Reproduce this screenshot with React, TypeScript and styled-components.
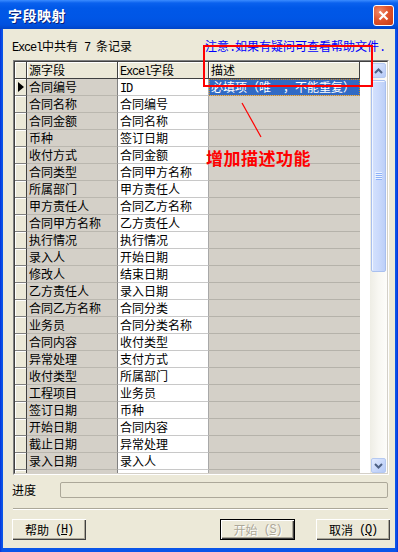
import React from "react";
import styled, { createGlobalStyle } from "styled-components";

const GlobalStyle = createGlobalStyle`
  html, body {
    margin: 0;
    padding: 0;
    background: #ffffff;
  }
  body {
    font-family: "Noto Sans CJK SC", "Liberation Sans", sans-serif;
    font-size: 12px;
    color: #000;
  }
`;

const rows: [string, string][] = [
  ["合同编号", "ID"],
  ["合同名称", "合同编号"],
  ["合同金额", "合同名称"],
  ["币种", "签订日期"],
  ["收付方式", "合同金额"],
  ["合同类型", "合同甲方名称"],
  ["所属部门", "甲方责任人"],
  ["甲方责任人", "合同乙方名称"],
  ["合同甲方名称", "乙方责任人"],
  ["执行情况", "执行情况"],
  ["录入人", "开始日期"],
  ["修改人", "结束日期"],
  ["乙方责任人", "录入日期"],
  ["合同乙方名称", "合同分类"],
  ["业务员", "合同分类名称"],
  ["合同内容", "收付类型"],
  ["异常处理", "支付方式"],
  ["收付类型", "所属部门"],
  ["工程项目", "业务员"],
  ["签订日期", "币种"],
  ["开始日期", "合同内容"],
  ["截止日期", "异常处理"],
  ["录入日期", "录入人"],
  ["", ""],
];

const Latin = styled.span`
  font-family: "Liberation Mono", monospace;
  font-size: 12px;
  letter-spacing: -1.2px;
`;

// ascii runs get the narrow mono face, like SimSun's half-width glyphs
const mix = (text: string) =>
  text.split(/([\x20-\x7e]+)/).map((part, i) =>
    /^[\x20-\x7e]+$/.test(part) ? <Latin key={i}>{part}</Latin> : part
  );

const Window = styled.div`
  position: relative;
  width: 398px;
  height: 552px;
  display: flex;
  flex-direction: column;
  background: linear-gradient(90deg, #0831d9 0px, #0a55e8 2px, #0a55e8 396px, #0831d9 398px);
  overflow: hidden;
`;

const TitleBar = styled.div`
  height: 29px;
  flex: none;
  display: flex;
  align-items: center;
  justify-content: space-between;
  padding: 0 4px 0 8px;
  background: linear-gradient(
    180deg,
    #3b8cff 0px,
    #0a61ee 3px,
    #0058e8 8px,
    #0056e6 18px,
    #0050de 25px,
    #0044c8 29px
  );
`;

const Title = styled.div`
  color: #fff;
  font-weight: bold;
  font-size: 14px;
  line-height: 16px;
  letter-spacing: 0.5px;
  text-shadow: 1px 1px 0 #0a2078;
`;

const CloseButton = styled.div`
  width: 21px;
  height: 21px;
  box-sizing: border-box;
  border: 1px solid #fff;
  border-radius: 3px;
  display: flex;
  align-items: center;
  justify-content: center;
  background: radial-gradient(circle at 30% 30%, #f08a6a 0%, #e0552e 45%, #c63a12 100%);
  margin-top: 1px;
`;

const Body = styled.div`
  flex: 1;
  margin: 0 3px 4px 3px;
  background: #ece9d8;
  display: flex;
  flex-direction: column;
  padding-top: 11px;
`;

const TopLine = styled.div`
  display: flex;
  justify-content: space-between;
  height: 12px;
  line-height: 12px;
  padding: 0 10px 0 9px;
`;

const Note = styled.span`
  color: #0000ff;
`;

const GridBox = styled.div`
  margin: 8px 0 0 10px;
  width: 376px;
  height: 415px;
  box-sizing: border-box;
  border: 1px solid;
  border-color: #808080 #ffffff #ffffff #808080;
`;

const GridInner = styled.div`
  height: 100%;
  box-sizing: border-box;
  border: 1px solid;
  border-color: #404040 #d4d0c8 #d4d0c8 #404040;
  display: flex;
  background: #fff;
  overflow: hidden;
`;

const Table = styled.div`
  width: 355px;
  display: grid;
  grid-template-columns: 12px 91px 91px 151px;
  grid-template-rows: 17px;
  grid-auto-rows: 17px;
  align-content: start;
  background: #fff;
`;

const Cell = styled.div`
  box-sizing: border-box;
  line-height: 16px;
  padding-left: 2px;
  white-space: nowrap;
  overflow: hidden;
`;

const HeadCell = styled(Cell)`
  background: #ece9d8;
  border-right: 1px solid #404040;
  border-bottom: 1px solid #404040;
  box-shadow: inset 1px 1px 0 #ffffff;
`;

const Indicator = styled(Cell)`
  background: #ece9d8;
  border-right: 1px solid #404040;
  border-bottom: 1px solid #808080;
  box-shadow: inset 1px 1px 0 #ffffff;
  display: flex;
  align-items: center;
`;

const Arrow = styled.div`
  width: 0;
  height: 0;
  border-left: 6px solid #000;
  border-top: 5px solid transparent;
  border-bottom: 5px solid transparent;
  margin-left: 1px;
`;

const SourceCell = styled(Cell)`
  background: #d4d0c8;
  border-right: 1px solid #808080;
  border-bottom: 1px solid #bab7af;
`;

const FieldCell = styled(Cell)`
  background: #fff;
  border-right: 1px solid #a8a8a8;
  border-bottom: 1px solid #c8c8c8;
`;

const DescCell = styled(Cell)<{ $selected?: boolean }>`
  background: ${(p) => (p.$selected ? "#316ac5" : "#d4d0c8")};
  color: ${(p) => (p.$selected ? "#fff" : "#000")};
  border-bottom: 1px solid #b5b2aa;
  outline: ${(p) => (p.$selected ? "1px dotted #d08a20" : "none")};
  outline-offset: -1px;
`;

const Scrollbar = styled.div`
  width: 17px;
  flex: none;
  display: flex;
  flex-direction: column;
  background: linear-gradient(90deg, #eeede5 0%, #f8f7f2 50%, #fdfdfa 100%);
`;

const ScrollButton = styled.div`
  width: 15px;
  height: 15px;
  margin: 1px 1px 0 1px;
  box-sizing: border-box;
  border: 1px solid #b5c9f1;
  border-radius: 2px;
  background: linear-gradient(135deg, #e2ebfe 0%, #c6d6fa 60%, #b7cbf6 100%);
  display: flex;
  align-items: center;
  justify-content: center;
`;

const Thumb = styled.div`
  width: 15px;
  height: 192px;
  margin: 2px 1px 0 1px;
  box-sizing: border-box;
  border: 1px solid #a9c0ef;
  border-radius: 2px;
  background: linear-gradient(90deg, #d5e2fd 0%, #cbdafc 50%, #bdd0f8 100%);
  box-shadow: inset 1px 1px 0 #f2f6ff;
  display: flex;
  align-items: center;
  justify-content: center;
`;

const Track = styled.div`
  flex: 1;
`;

const ProgressRow = styled.div`
  margin-top: 7px;
  height: 16px;
  display: flex;
  align-items: center;
  padding-left: 9px;
`;

const ProgressLabel = styled.span`
  width: 48px;
  line-height: 16px;
`;

const ProgressBar = styled.div`
  width: 328px;
  height: 16px;
  box-sizing: border-box;
  border: 1px solid #aca899;
  border-radius: 2px;
  background: #ece9d8;
`;

const Separator = styled.div`
  margin: 10px 0 0 10px;
  width: 375px;
  border-top: 1px solid #aca899;
  border-bottom: 1px solid #ffffff;
`;

const ButtonRow = styled.div`
  margin-top: 9px;
  display: flex;
  padding-left: 9px;
`;

const Button = styled.div<{ $width: number; $disabled?: boolean; $default?: boolean }>`
  width: ${(p) => p.$width}px;
  height: 21px;
  box-sizing: border-box;
  background: #ece9d8;
  display: flex;
  align-items: center;
  justify-content: center;
  line-height: 14px;
  border: ${(p) => (p.$default ? "1px solid #000" : "none")};
  box-shadow: inset 1px 1px 0 #fff, inset -1px -1px 0 #404040, inset -2px -2px 0 #aca899;
  color: ${(p) => (p.$disabled ? "#aca899" : "#000")};
  text-shadow: ${(p) => (p.$disabled ? "1px 1px 0 #fff" : "none")};
`;

const Spacer = styled.div<{ $w?: number }>`
  ${(p) => (p.$w ? `width: ${p.$w}px;` : "flex: 1;")}
`;

const Hot = styled.span`
  text-decoration: underline;
`;

// --- annotation overlays drawn on top of the screenshot ---
const RedBox = styled.div`
  position: absolute;
  left: 203px;
  top: 45px;
  width: 170px;
  height: 42px;
  box-sizing: border-box;
  border: 2px solid #ff0000;
  pointer-events: none;
`;

const RedLine = styled.svg`
  position: absolute;
  left: 0;
  top: 0;
  pointer-events: none;
`;

const RedText = styled.div`
  position: absolute;
  left: 206px;
  top: 148px;
  color: #ff0000;
  font-weight: bold;
  font-size: 17px;
  line-height: 20px;
  letter-spacing: 0.5px;
`;

const Chevron = ({ up }: { up?: boolean }) => (
  <svg width="9" height="6" viewBox="0 0 9 6">
    <polyline
      points={up ? "1,5 4.5,1.5 8,5" : "1,1 4.5,4.5 8,1"}
      fill="none"
      stroke="#4d6185"
      strokeWidth="2"
    />
  </svg>
);

const Grip = () => (
  <svg width="7" height="8" viewBox="0 0 7 8">
    {[0, 2, 4, 6].map((y) => (
      <g key={y}>
        <line x1="0" y1={y + 0.5} x2="7" y2={y + 0.5} stroke="#eef4fe" />
        <line x1="1" y1={y + 1.5} x2="7" y2={y + 1.5} stroke="#8cb0f8" />
      </g>
    ))}
  </svg>
);

export default function App() {
  return (
    <>
      <GlobalStyle />
      <Window>
        <TitleBar>
          <Title>字段映射</Title>
          <CloseButton>
            <svg width="11" height="11" viewBox="0 0 11 11">
              <path d="M1.5 1.5 L9.5 9.5 M9.5 1.5 L1.5 9.5" stroke="#fff" strokeWidth="2.2" />
            </svg>
          </CloseButton>
        </TitleBar>
        <Body>
          <TopLine>
            <span>{mix("Excel中共有 7 条记录")}</span>
            <Note>{mix("注意.如果有疑问可查看帮助文件.")}</Note>
          </TopLine>
          <GridBox>
            <GridInner>
              <Table>
                <HeadCell />
                <HeadCell>源字段</HeadCell>
                <HeadCell>{mix("Excel字段")}</HeadCell>
                <HeadCell>描述</HeadCell>
                {rows.map(([src, field], i) => (
                  <React.Fragment key={i}>
                    <Indicator>{i === 0 && <Arrow />}</Indicator>
                    <SourceCell>{src}</SourceCell>
                    <FieldCell>{mix(field)}</FieldCell>
                    <DescCell $selected={i === 0}>
                      {i === 0 ? "必填项（唯一，不能重复）" : ""}
                    </DescCell>
                  </React.Fragment>
                ))}
              </Table>
              <Scrollbar>
                <ScrollButton>
                  <Chevron up />
                </ScrollButton>
                <Thumb>
                  <Grip />
                </Thumb>
                <Track />
                <ScrollButton>
                  <Chevron />
                </ScrollButton>
              </Scrollbar>
            </GridInner>
          </GridBox>
          <ProgressRow>
            <ProgressLabel>进度</ProgressLabel>
            <ProgressBar />
          </ProgressRow>
          <Separator />
          <ButtonRow>
            <Button $width={74}>
              帮助<Latin>&nbsp;(<Hot>H</Hot>)</Latin>
            </Button>
            <Spacer />
            <Button $width={75} $disabled $default>
              开始<Latin>&nbsp;(<Hot>S</Hot>)</Latin>
            </Button>
            <Spacer $w={21} />
            <Button $width={74}>
              取消<Latin>&nbsp;(<Hot>Q</Hot>)</Latin>
            </Button>
            <Spacer $w={5} />
          </ButtonRow>
        </Body>
        <RedBox />
        <RedLine width="398" height="552">
          <line x1="242" y1="103" x2="261" y2="137" stroke="#ff0000" strokeWidth="1.2" />
        </RedLine>
        <RedText>增加描述功能</RedText>
      </Window>
    </>
  );
}
